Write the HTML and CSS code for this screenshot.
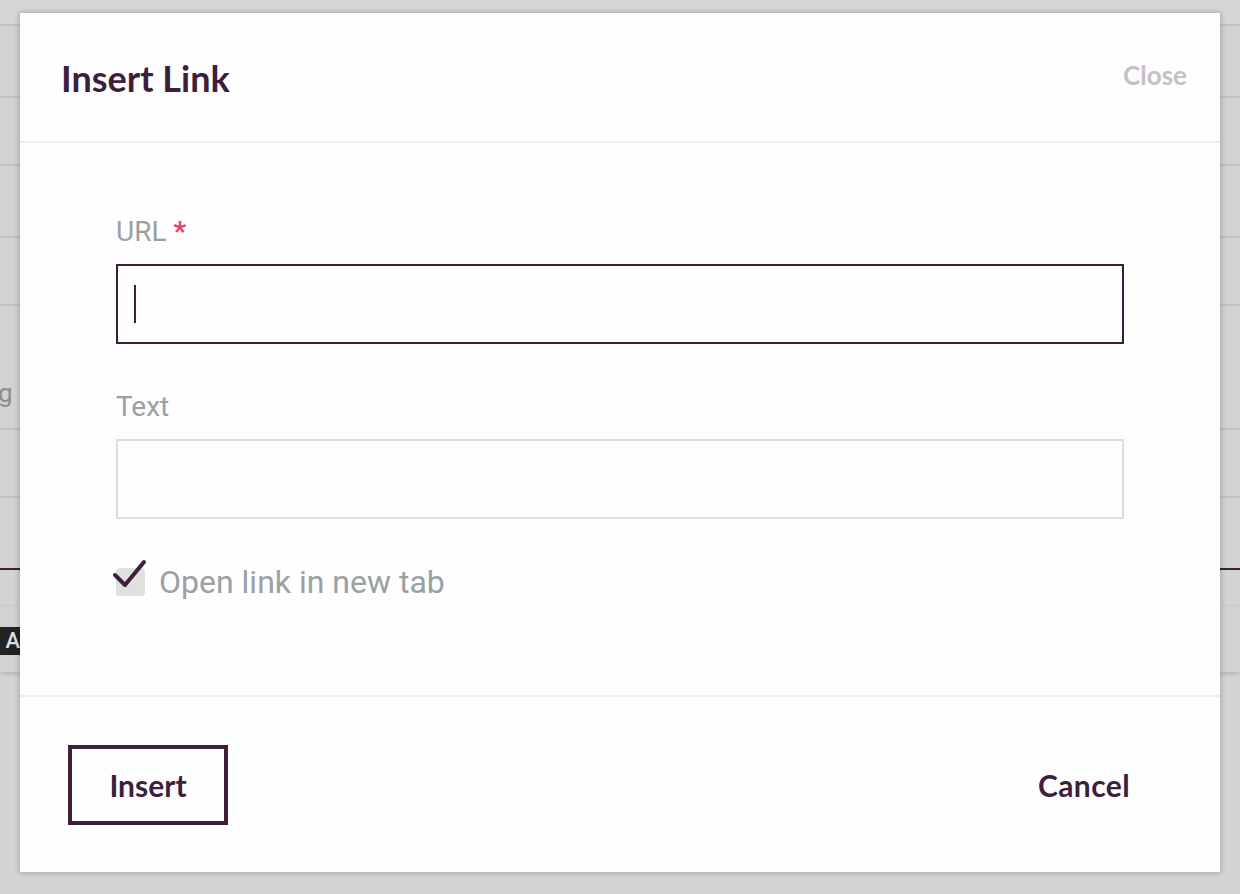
FILE: index.html
```html
<!DOCTYPE html>
<html>
<head>
<meta charset="utf-8">
<link rel="stylesheet" href="styles.css">
</head>
<body>
<div class="page">
  <div class="row r0"></div>
  <div class="row r1"></div>
  <div class="row r2"></div>
  <div class="row r3"></div>
  <div class="row r4"></div>
  <div class="row r5"><span class="peek">g</span></div>
  <div class="row r6"></div>
  <div class="row r7"></div>
  <div class="row r8"></div>
  <div class="row r9"><span class="abox">A</span></div>
</div>

<div class="modal">
  <div class="modal-header">
    <h1 class="title">Insert Link</h1>
    <span class="close">Close</span>
  </div>
  <div class="modal-body">
    <label class="label">URL <span class="req">*</span></label>
    <div class="input focused"><span class="caret"></span></div>
    <label class="label label-text">Text</label>
    <div class="input"></div>
    <div class="check-row">
      <span class="checkbox">
        <svg class="tick" width="40" height="36" viewBox="0 0 40 36"><path d="M3 19 L13 29 L32 6" fill="none" stroke="#3d1f3b" stroke-width="4" stroke-linecap="round" stroke-linejoin="round"/></svg>
      </span>
      <span class="check-label">Open link in new tab</span>
    </div>
  </div>
  <div class="modal-footer">
    <button class="btn-insert">Insert</button>
    <span class="cancel">Cancel</span>
  </div>
</div>
</body>
</html>
```

FILE: styles.css
```css
html, body {
  margin: 0;
  padding: 0;
}
body {
  width: 1240px;
  height: 894px;
  background: #d4d4d4;
  overflow: hidden;
  position: relative;
  font-family: Roboto, "Liberation Sans", sans-serif;
}
.page {
  display: flex;
  flex-direction: column;
  box-shadow: 0 3px 4px rgba(0,0,0,0.12);
  background: #d2d2d2;
}
.row {
  border-bottom: 2px solid #c0c0c0;
  position: relative;
}
.r0 { height: 24px; background: #d6d6d6; }
.r1 { height: 70px; }
.r2 { height: 66px; }
.r3 { height: 70px; }
.r4 { height: 66px; }
.r5 { height: 122px; }
.r6 { height: 66px; }
.r7 { height: 70px; border-bottom: 2px solid #3d1f3b; }
.r8 { height: 35px; border-bottom: 1px solid #c8c8c8; }
.r9 { height: 66px; border-bottom: none; }
.peek {
  position: absolute;
  left: -2px;
  top: 72px;
  font-size: 26px;
  color: #8a8d8d;
}
.abox {
  position: absolute;
  left: 0;
  top: 21px;
  width: 20px;
  height: 28px;
  background: #222;
  color: #ddd;
  font-size: 22px;
  font-weight: 500;
  line-height: 28px;
  text-align: right;
}
.modal {
  position: absolute;
  left: 20px;
  top: 13px;
  width: 1200px;
  height: 859px;
  background: #fefefe;
  box-shadow: 0 0 5px 1px rgba(0,0,0,0.22);
  display: flex;
  flex-direction: column;
}
.modal-header {
  height: 128px;
  border-bottom: 2px solid #efefef;
  display: flex;
  align-items: center;
  justify-content: space-between;
  padding: 0 33px 0 41px;
  flex: none;
}
.title {
  margin: 0;
  margin-top: 2px;
  font-family: Lato, "Open Sans", sans-serif;
  font-weight: 700;
  font-size: 36px;
  color: #3d1f3b;
}
.close {
  font-family: Lato, sans-serif;
  font-weight: 700;
  font-size: 26px;
  color: #c6bfc6;
  margin-top: -5px;
}
.modal-body {
  height: 554px;
  border-bottom: 2px solid #efefef;
  padding: 72px 96px 0;
  display: flex;
  flex-direction: column;
  flex: none;
  box-sizing: border-box;
}
.label {
  font-size: 28px;
  color: #9aa1a1;
  line-height: 34px;
  height: 34px;
  margin-bottom: 15px;
}
.label-text {
  margin-top: 46px;
}
.req {
  color: #e8416a;
  font-weight: 700;
}
.input {
  height: 80px;
  box-sizing: border-box;
  border: 2px solid #dedede;
  display: flex;
  align-items: center;
  padding-left: 16px;
  flex: none;
}
.input.focused {
  border-color: #3d1f3b;
}
.caret {
  width: 2px;
  height: 38px;
  background: #3d1f3b;
}
.check-row {
  display: flex;
  align-items: center;
  margin-top: 44px;
}
.checkbox {
  width: 29px;
  height: 28px;
  background: #e0e0e0;
  border-radius: 4px;
  position: relative;
  margin-right: 14px;
  flex: none;
}
.tick {
  position: absolute;
  left: -4px;
  top: -12px;
}
.check-label {
  font-size: 32px;
  color: #9aa1a1;
  line-height: 38px;
}
.modal-footer {
  flex: 1;
  display: flex;
  align-items: flex-start;
  justify-content: space-between;
  padding: 48px 90px 0 48px;
}
.btn-insert {
  width: 160px;
  height: 80px;
  box-sizing: border-box;
  border: 4px solid #3d1f3b;
  background: #fefefe;
  font-family: Lato, sans-serif;
  font-weight: 700;
  font-size: 30px;
  color: #3d1f3b;
  padding: 0;
}
.cancel {
  font-family: Lato, sans-serif;
  font-weight: 700;
  font-size: 30px;
  letter-spacing: 0.4px;
  color: #3d1f3b;
  line-height: 80px;
}
```
